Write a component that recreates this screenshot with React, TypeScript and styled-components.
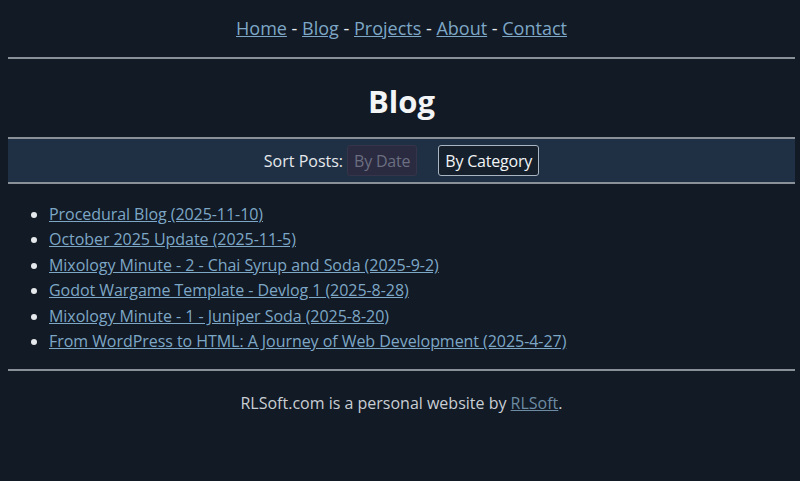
import styled, { createGlobalStyle } from "styled-components"

const GlobalStyle = createGlobalStyle`
    body {
        margin: 8px 5px 8px 8px;
        background-color: #111a25;
        color: #e6e9ec;
        font-family: 'Open Sans', 'Noto Sans', sans-serif;
        font-size: 16px;
    }
`

const palette = {
    link: "#7ea7c6",
    visited: "#6d8aa3",
    rule: "#8a9097",
    bar: "#1f3045",
}

const Nav = styled.nav`
    text-align: center;
    font-size: 18px;
    line-height: 24px;
    padding: 8px 0 17px;
`

const NavLink = styled.a`
    color: ${palette.link};
    text-decoration: underline;
`

const Rule = styled.hr`
    border: none;
    border-top: 2px solid ${palette.rule};
    margin: 0;
`

const Title = styled.h1`
    text-align: center;
    font-size: 31px;
    font-weight: 700;
    margin: 21px 0 15px;
    color: #f2f4f6;
`

const SortBar = styled.div`
    display: flex;
    justify-content: center;
    align-items: center;
    gap: 4px;
    background-color: ${palette.bar};
    border-top: 2px solid ${palette.rule};
    border-bottom: 2px solid ${palette.rule};
    height: 43px;
    font-size: 16px;
`

const SortButton = styled.button<{ disabled?: boolean }>`
    font-family: 'Open Sans', 'Noto Sans', sans-serif;
    font-size: 16px;
    height: 31px;
    padding: 0 6px;
    border-radius: 3px;
    border: 1px solid ${({ disabled }) => (disabled ? "#35344a" : "#a9b6c2")};
    background-color: ${({ disabled }) => (disabled ? "#2a2a40" : "#15202c")};
    color: ${({ disabled }) => (disabled ? "#6b6f80" : "#f2f4f6")};
    margin-right: ${({ disabled }) => (disabled ? "17px" : "0")};
    letter-spacing: -0.2px;
`

const PostList = styled.ul`
    margin: 18px 0 15px;
    padding-left: 41px;
    list-style: disc;
`

const PostItem = styled.li`
    line-height: 25.4px;
    font-size: 16px;
    letter-spacing: -0.05px;
`

const PostLink = styled.a`
    color: ${palette.link};
`

const Footer = styled.footer`
    text-align: center;
    padding-top: 21px;
    color: #c9ced4;
`

const FooterLink = styled.a`
    color: ${palette.visited};
`

const links = ["Home", "Blog", "Projects", "About", "Contact"]

const posts = [
    "Procedural Blog (2025-11-10)",
    "October 2025 Update (2025-11-5)",
    "Mixology Minute - 2 - Chai Syrup and Soda (2025-9-2)",
    "Godot Wargame Template - Devlog 1 (2025-8-28)",
    "Mixology Minute - 1 - Juniper Soda (2025-8-20)",
    "From WordPress to HTML: A Journey of Web Development (2025-4-27)",
]

export default function App() {
    return (
        <>
            <GlobalStyle />
            <Nav>
                {links.map((l, i) => (
                    <span key={l}>
                        {i > 0 && " - "}
                        <NavLink href="#">{l}</NavLink>
                    </span>
                ))}
            </Nav>
            <Rule />
            <Title>Blog</Title>
            <SortBar>
                <span>Sort Posts:</span>
                <SortButton disabled>By Date</SortButton>
                <SortButton>By Category</SortButton>
            </SortBar>
            <PostList>
                {posts.map((p) => (
                    <PostItem key={p}>
                        <PostLink href="#">{p}</PostLink>
                    </PostItem>
                ))}
            </PostList>
            <Rule />
            <Footer>
                RLSoft.com is a personal website by <FooterLink href="#">RLSoft</FooterLink>.
            </Footer>
        </>
    )
}
